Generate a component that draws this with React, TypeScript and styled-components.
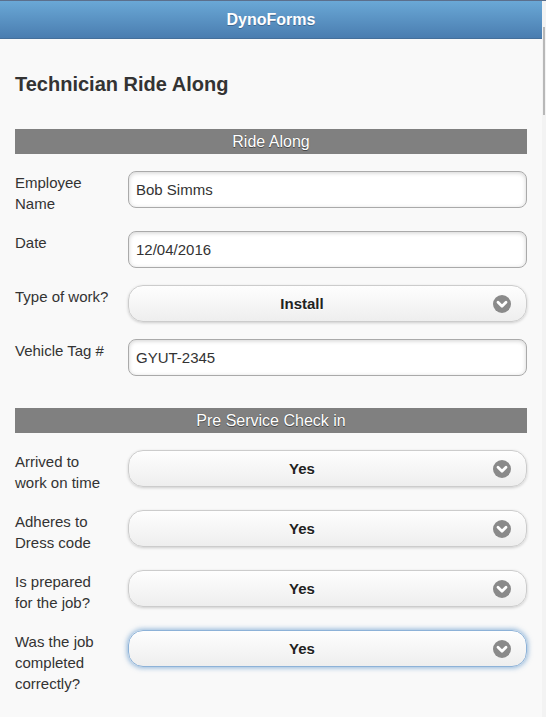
import React from 'react';
import styled, { createGlobalStyle } from 'styled-components';

const GlobalStyle = createGlobalStyle`
  body {
    margin: 0;
    background: #f9f9f9;
    font-family: "Liberation Sans", Arial, sans-serif;
    color: #333;
  }
`;

type Field =
  | { kind: 'text'; label: string; value: string }
  | { kind: 'select'; label: string; value: string; focused?: boolean };

const sections: { title: string; fields: Field[] }[] = [
  {
    title: 'Ride Along',
    fields: [
      { kind: 'text', label: 'Employee Name', value: 'Bob Simms' },
      { kind: 'text', label: 'Date', value: '12/04/2016' },
      { kind: 'select', label: 'Type of work?', value: 'Install' },
      { kind: 'text', label: 'Vehicle Tag #', value: 'GYUT-2345' },
    ],
  },
  {
    title: 'Pre Service Check in',
    fields: [
      { kind: 'select', label: 'Arrived to work on time', value: 'Yes' },
      { kind: 'select', label: 'Adheres to Dress code', value: 'Yes' },
      { kind: 'select', label: 'Is prepared for the job?', value: 'Yes' },
      { kind: 'select', label: 'Was the job completed correctly?', value: 'Yes', focused: true },
    ],
  },
];

const ArrowIcon = () => (
  <svg width="18" height="18" viewBox="0 0 18 18">
    <circle cx="9" cy="9" r="9" fill="#8a8a8a" />
    <path d="M5 7.3 L9 11.2 L13 7.3" fill="none" stroke="#fff" strokeWidth="2.8" strokeLinecap="round" strokeLinejoin="round" />
  </svg>
);

const App = () => {
  return (
    <S.Shell>
      <GlobalStyle />
      <S.Page>
        <S.Header>DynoForms</S.Header>
        <S.Content>
          <S.Title>Technician Ride Along</S.Title>
          {sections.map((section, i) => (
            <S.Section key={section.title} $first={i === 0}>
              <S.SectionBar>{section.title}</S.SectionBar>
              {section.fields.map((f) => (
                <S.Row key={f.label}>
                  <S.Label>{f.label}</S.Label>
                  <S.Control>
                    {f.kind === 'text' ? (
                      <S.TextInput defaultValue={f.value} readOnly />
                    ) : (
                      <S.SelectButton $focused={!!f.focused}>
                        <S.SelectText>{f.value}</S.SelectText>
                        <S.SelectIcon>
                          <ArrowIcon />
                        </S.SelectIcon>
                      </S.SelectButton>
                    )}
                  </S.Control>
                </S.Row>
              ))}
            </S.Section>
          ))}
        </S.Content>
      </S.Page>
      <S.ScrollTrack>
        <S.ScrollThumb />
      </S.ScrollTrack>
    </S.Shell>
  );
};

export default App;

const S = {
  Shell: styled.div`
    display: flex;
    min-height: 717px;
  `,

  Page: styled.div`
    flex: 1;
    min-width: 0;
  `,

  Header: styled.header`
    height: 37px;
    line-height: 37px;
    border-top: 1px solid #5b6f8c;
    border-bottom: 1px solid #456f9a;
    background: linear-gradient(#6aa8d6, #4a7db0);
    color: #fff;
    font-size: 16px;
    font-weight: bold;
    text-align: center;
    text-shadow: 0 1px 0 #3e6790;
  `,

  Content: styled.main`
    padding: 0 15px 20px;
  `,

  Title: styled.h2`
    margin: 33px 0 33px;
    font-size: 20px;
    line-height: 24px;
    font-weight: bold;
    color: #333;
  `,

  Section: styled.section<{ $first: boolean }>`
    padding-top: ${(p) => (p.$first ? '0' : '15px')};
  `,

  SectionBar: styled.div`
    height: 25px;
    line-height: 26px;
    background: #808080;
    color: #fff;
    font-size: 16px;
    text-align: center;
    text-shadow: 0 1px 0 #4a4a4a, 0 0 1px #4a4a4a;
    margin-bottom: 17px;
  `,

  Row: styled.div`
    display: flex;
    align-items: flex-start;
    margin-bottom: 17px;
  `,

  Label: styled.label`
    width: 96px;
    flex-shrink: 0;
    padding-top: 1px;
    font-size: 15px;
    line-height: 21px;
    color: #333;
  `,

  Control: styled.div`
    flex: 1;
    margin-left: 17px;
  `,

  TextInput: styled.input`
    display: block;
    box-sizing: border-box;
    width: 100%;
    height: 37px;
    padding: 0 7px;
    border: 1px solid #aaa;
    border-radius: 8px;
    background: #fff;
    box-shadow: inset 0 1px 4px rgba(0, 0, 0, 0.18);
    font-family: "Liberation Sans", Arial, sans-serif;
    font-size: 15px;
    color: #333;
    outline: none;
  `,

  SelectButton: styled.div<{ $focused: boolean }>`
    box-sizing: border-box;
    display: flex;
    align-items: center;
    height: 37px;
    padding: 0 15px 0 12px;
    border: 1px solid ${(p) => (p.$focused ? '#8db2d8' : '#cccccc')};
    border-radius: 15px;
    background: linear-gradient(#fefefe, #eeeeee);
    box-shadow: ${(p) =>
      p.$focused ? '0 0 5px 1px rgba(56, 123, 190, 0.55)' : '0 1px 3px rgba(0, 0, 0, 0.18)'};
  `,

  SelectText: styled.span`
    flex: 1;
    padding-right: 30px;
    text-align: center;
    font-size: 15px;
    font-weight: bold;
    color: #222;
    text-shadow: 0 1px 0 #fff;
  `,

  SelectIcon: styled.span`
    display: flex;
    width: 18px;
    height: 18px;
  `,

  ScrollTrack: styled.div`
    width: 4px;
    flex-shrink: 0;
    background: #f3f3f3;
    border-top: 1px solid #5b6f8c;
  `,

  ScrollThumb: styled.div`
    width: 2px;
    height: 88px;
    margin: 26px 0 0 1px;
    background: #b8b8b8;
  `,
};
